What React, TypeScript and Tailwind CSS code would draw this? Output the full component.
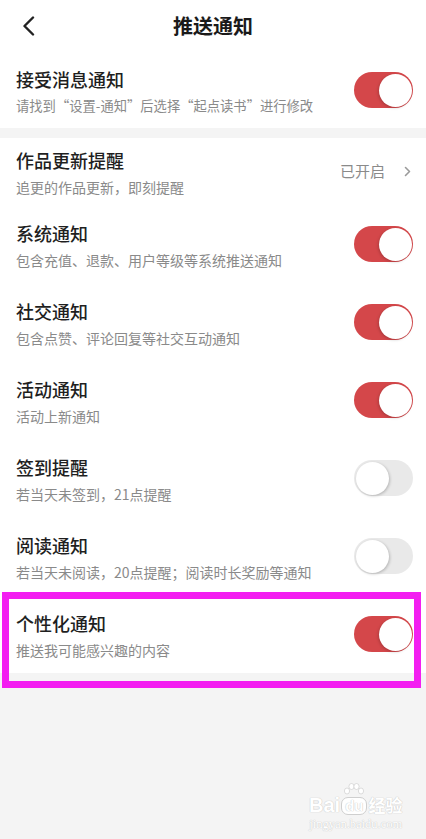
import { Fragment } from 'react'

type Row = {
  title: string
  desc: string
  on: boolean
}

const rows: Row[] = [
  { title: '系统通知', desc: '包含充值、退款、用户等级等系统推送通知', on: true },
  { title: '社交通知', desc: '包含点赞、评论回复等社交互动通知', on: true },
  { title: '活动通知', desc: '活动上新通知', on: true },
  { title: '签到提醒', desc: '若当天未签到，21点提醒', on: false },
  { title: '阅读通知', desc: '若当天未阅读，20点提醒；阅读时长奖励等通知', on: false },
  { title: '个性化通知', desc: '推送我可能感兴趣的内容', on: true }
]

function Toggle({ on }: { on: boolean }) {
  return (
    <div
      className={
        on
          ? 'flex items-center justify-end w-[59px] h-[36px] rounded-full bg-[#d4474a] px-[1.5px] shrink-0'
          : 'flex items-center justify-start w-[59px] h-[36px] rounded-full bg-[#e9e9e9] px-[1.5px] shrink-0'
      }
    >
      <div
        className={
          on
            ? 'w-[33px] h-[33px] rounded-full bg-white shadow-[-1px_1px_3px_rgba(0,0,0,0.18)]'
            : 'w-[33px] h-[33px] rounded-full bg-white shadow-[1px_1px_3px_rgba(0,0,0,0.22)]'
        }
      />
    </div>
  )
}

function Texts({ title, desc, small }: { title: string; desc: string; small?: boolean }) {
  return (
    <div className="flex flex-col gap-[6px] pt-[2px]">
      <div className="text-[18px] leading-[24px] font-medium text-[#1f1f1f]">{title}</div>
      <div
        className={
          small
            ? 'text-[13.3px] leading-[18px] text-[#8a8a8a]'
            : 'text-[14px] leading-[18px] text-[#8a8a8a]'
        }
      >
        {desc}
      </div>
    </div>
  )
}

export default function App() {
  return (
    <div
      className="relative w-full min-h-[839px] bg-[#f4f4f4] overflow-hidden"
      style={{ fontFamily: '"Noto Sans CJK SC", "Noto Sans", sans-serif' }}
    >
      {/* header */}
      <div className="relative flex items-center justify-center h-[52px] bg-white">
        <svg
          className="absolute left-[22px] top-[16px]"
          width="13"
          height="20"
          viewBox="0 0 13 20"
          fill="none"
        >
          <polyline
            points="11,1.5 2.5,10 11,18.5"
            stroke="#222"
            strokeWidth="2.4"
            strokeLinecap="round"
            strokeLinejoin="round"
          />
        </svg>
        <div className="text-[20px] font-bold text-[#1a1a1a]">推送通知</div>
      </div>

      {/* master switch */}
      <div className="flex items-center justify-between h-[76px] bg-white pl-4 pr-[13px]">
        <Texts small title="接受消息通知" desc="请找到“设置-通知”后选择“起点读书”进行修改" />
        <Toggle on />
      </div>

      <div className="h-[10px]" />

      <div className="bg-white">
        <div className="flex items-start justify-between h-[67px] pl-4 pr-[15px]">
          <div className="flex flex-col gap-[6px] pt-[10px]">
            <div className="text-[18px] leading-[24px] font-medium text-[#1f1f1f]">作品更新提醒</div>
            <div className="text-[14px] leading-[18px] text-[#8a8a8a]">追更的作品更新，即刻提醒</div>
          </div>
          <div className="flex items-center gap-[19px] h-[67px]">
            <span className="text-[15px] text-[#8a8a8a]">已开启</span>
            <svg width="7" height="11" viewBox="0 0 7 11" fill="none">
              <polyline
                points="1.5,1.5 5.5,5.5 1.5,9.5"
                stroke="#9a9a9a"
                strokeWidth="1.6"
                strokeLinecap="round"
                strokeLinejoin="round"
              />
            </svg>
          </div>
        </div>

        {rows.map(({ title, desc, on }) => (
          <Fragment key={title}>
            <div className="flex items-center justify-between h-[78px] pl-4 pr-[13px]">
              <Texts title={title} desc={desc} />
              <Toggle on={on} />
            </div>
          </Fragment>
        ))}
      </div>

      {/* highlight annotation */}
      <div className="absolute left-[2px] top-[592px] w-[419px] h-[96px] border-[7px] border-[#f31ef1]" />

      {/* watermark */}
      <div className="absolute left-[309px] top-[783px] flex flex-col items-center text-white [text-shadow:0_0_1px_#c9c9c9,0_0_1px_#c9c9c9]">
        <div className="flex items-end h-[32px]">
          <span className="text-[20px] leading-[20px] font-bold" style={{ fontFamily: '"Liberation Sans", sans-serif' }}>
            Bai
          </span>
          <span className="relative flex flex-col items-center mx-[1px]">
            <svg width="22" height="14" viewBox="0 0 22 14">
              <g fill="#fff" stroke="#cfcfcf" strokeWidth="0.7">
                <ellipse cx="4" cy="8" rx="2.6" ry="3" />
                <ellipse cx="8.5" cy="3.5" rx="2.6" ry="3" />
                <ellipse cx="13.5" cy="3.5" rx="2.6" ry="3" />
                <ellipse cx="18" cy="8" rx="2.6" ry="3" />
              </g>
            </svg>
            <span
              className="text-[15px] leading-[16px] font-bold px-[3px] rounded-[7px] border border-[#cfcfcf] bg-white text-white"
              style={{ fontFamily: '"Liberation Sans", sans-serif' }}
            >
              du
            </span>
          </span>
          <span className="text-[17px] leading-[20px] font-bold">经验</span>
        </div>
        <div className="text-[12.5px] leading-[14px] mt-[2px]" style={{ fontFamily: '"Liberation Serif", serif' }}>
          jingyan.baidu.com
        </div>
      </div>
    </div>
  )
}
